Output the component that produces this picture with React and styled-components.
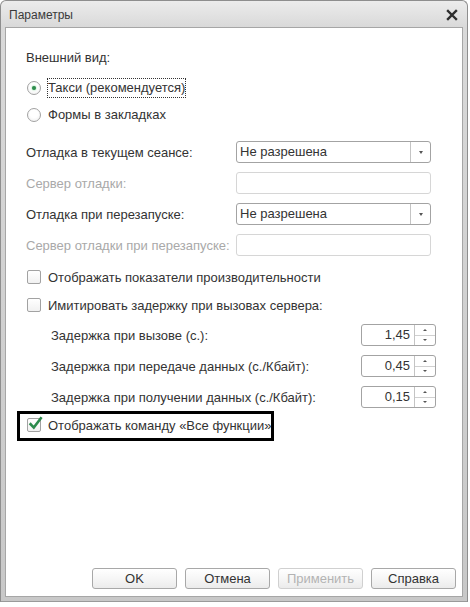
import React from "react";
import styled, { createGlobalStyle, css } from "styled-components";

const Global = createGlobalStyle`
  html, body { margin: 0; padding: 0; background: #ffffff; }
  body { font-family: "Liberation Sans", Arial, sans-serif; font-size: 13px; color: #333; }
  * { box-sizing: border-box; }
`;

const Window = styled.div`
  width: 468px;
  height: 602px;
  display: flex;
  flex-direction: column;
  border: 1px solid #8e8e8e;
  border-bottom-color: #9a9a9a;
  border-radius: 6px 6px 0 0;
  background: linear-gradient(180deg, #ececec 0px, #d9d9d9 26px, #cfcfcf 60%, #c8c8c8 100%);
`;

const TitleBar = styled.div`
  height: 26px;
  flex: none;
  display: flex;
  align-items: center;
  justify-content: space-between;
  padding: 2px 9px 0 8px;
  font-size: 12px;
  color: #3a3a3a;
`;

const Close = styled.div`
  width: 12px;
  height: 12px;
  display: flex;
`;

const Client = styled.div`
  flex: 1;
  margin: 0 4px 4px 4px;
  background: #ffffff;
  border: 1px solid #a6a6a6;
  display: flex;
  flex-direction: column;
  padding: 22px 6px 7px 20px;
`;

const Heading = styled.div`
  height: 16px;
  line-height: 16px;
  margin-bottom: 8px;
`;

const RadioRow = styled.div`
  height: 27px;
  display: flex;
  align-items: center;
  padding-left: 1px;
`;

const RadioCircle = styled.span`
  width: 14px;
  height: 14px;
  border-radius: 50%;
  border: 1px solid #a2a2a2;
  background: radial-gradient(circle at 50% 40%, #ffffff 40%, #ececec 100%);
  display: flex;
  align-items: center;
  justify-content: center;
  margin-right: 7px;
  &::after {
    content: "";
    width: 4px;
    height: 4px;
    border-radius: 50%;
    background: ${(p) => (p.$on ? "#2f8c4c" : "transparent")};
    box-shadow: ${(p) => (p.$on ? "0 0 2px #5fbf7a" : "none")};
  }
`;

const RadioLabel = styled.span`
  padding: 1px 0;
  line-height: 16px;
  border: 1px dotted ${(p) => (p.$focus ? "#333" : "transparent")};
  margin-left: -1px;
`;

const FormGrid = styled.div`
  display: grid;
  grid-template-columns: 210px 195px;
  grid-auto-rows: 22px;
  row-gap: 9px;
  margin-top: 13px;
  align-items: center;
`;

const Label = styled.span`
  color: ${(p) => (p.$disabled ? "#a9a9a9" : "#333")};
  white-space: nowrap;
`;

const SelectBox = styled.div`
  height: 22px;
  display: flex;
  border: 1px solid #a3a3a3;
  border-radius: 3px;
  background: #fff;
`;

const SelectValue = styled.span`
  flex: 1;
  line-height: 20px;
  padding-left: 3px;
`;

const SelectButton = styled.span`
  width: 20px;
  border-left: 1px solid #c4c4c4;
  display: flex;
  align-items: center;
  justify-content: center;
  &::after {
    content: "";
    border-left: 2.5px solid transparent;
    border-right: 2.5px solid transparent;
    border-top: 3px solid #555;
  }
`;

const DisabledInput = styled.div`
  height: 22px;
  border: 1px solid #d6d6d6;
  border-radius: 3px;
  background: #fff;
`;

const CheckRow = styled.div`
  height: 22px;
  display: flex;
  align-items: center;
  margin-top: ${(p) => p.$mt || 0}px;
  padding-left: 1px;
`;

const Box = styled.span`
  position: relative;
  width: 14px;
  height: 14px;
  border: 1px solid #a2a2a2;
  border-radius: 2px;
  background: linear-gradient(180deg, #ffffff, #f1f1f1);
  margin-right: 7px;
  flex: none;
`;

const Tick = styled.svg`
  position: absolute;
  left: 0px;
  top: -3px;
  width: 15px;
  height: 15px;
`;

const SpinGrid = styled.div`
  display: grid;
  grid-template-columns: 310px 75px;
  grid-auto-rows: 22px;
  row-gap: 9px;
  margin-top: 8px;
  padding-left: 25px;
  align-items: center;
`;

const Spin = styled.div`
  height: 22px;
  display: flex;
  border: 1px solid #a3a3a3;
  border-radius: 3px;
  background: #fff;
`;

const SpinValue = styled.span`
  flex: 1;
  text-align: right;
  line-height: 20px;
  padding-right: 4px;
`;

const SpinArrows = styled.span`
  width: 21px;
  border-left: 1px solid #c4c4c4;
  display: flex;
  flex-direction: column;
`;

const Arrow = styled.span`
  flex: 1;
  display: flex;
  align-items: center;
  justify-content: center;
  ${(p) =>
    p.$up
      ? css`
          border-bottom: 1px solid #d0d0d0;
          &::after {
            content: "";
            border-left: 2px solid transparent;
            border-right: 2px solid transparent;
            border-bottom: 2px solid #555;
          }
        `
      : css`
          &::after {
            content: "";
            border-left: 2px solid transparent;
            border-right: 2px solid transparent;
            border-top: 2px solid #555;
          }
        `}
`;

const Highlight = styled.div`
  width: 257px;
  height: 30px;
  margin: 3px 0 0 -9px;
  border: 3px solid #000;
  display: flex;
  align-items: center;
  padding-left: 7px;
  padding-bottom: 2px;
`;

const Spacer = styled.div`
  flex: 1;
`;

const Buttons = styled.div`
  display: flex;
  justify-content: flex-end;
  gap: 8px;
`;

const Button = styled.div`
  width: 85px;
  height: 21px;
  border: 1px solid ${(p) => (p.$disabled ? "#d0d0d0" : "#a8a8a8")};
  border-radius: 3px;
  background: linear-gradient(180deg, #ffffff 0%, #f6f6f6 50%, #ebebeb 100%);
  color: ${(p) => (p.$disabled ? "#b3b3b3" : "#333")};
  display: flex;
  align-items: center;
  justify-content: center;
  line-height: 19px;
`;

function Check({ checked, children, mt }) {
  return (
    <>
      <Box>
        {checked && (
          <Tick viewBox="0 0 15 15">
            <path d="M2.6 8.2 L5.8 11.6 L12.8 2.2" fill="none" stroke="#2b8a4b" strokeWidth="2.6" strokeLinecap="square" strokeLinejoin="miter" />
          </Tick>
        )}
      </Box>
      <Label>{children}</Label>
    </>
  );
}

export default function App() {
  return (
    <>
      <Global />
      <Window>
        <TitleBar>
          <span>Параметры</span>
          <Close>
            <svg viewBox="0 0 12 12" width="12" height="12">
              <path d="M2 2 L10 10 M10 2 L2 10" stroke="#2e2e2e" strokeWidth="2.4" strokeLinecap="square" />
            </svg>
          </Close>
        </TitleBar>
        <Client>
          <Heading>Внешний вид:</Heading>
          <RadioRow>
            <RadioCircle $on />
            <RadioLabel $focus>Такси (рекомендуется)</RadioLabel>
          </RadioRow>
          <RadioRow>
            <RadioCircle />
            <RadioLabel>Формы в закладках</RadioLabel>
          </RadioRow>

          <FormGrid>
            <Label>Отладка в текущем сеансе:</Label>
            <SelectBox>
              <SelectValue>Не разрешена</SelectValue>
              <SelectButton />
            </SelectBox>
            <Label $disabled>Сервер отладки:</Label>
            <DisabledInput />
            <Label>Отладка при перезапуске:</Label>
            <SelectBox>
              <SelectValue>Не разрешена</SelectValue>
              <SelectButton />
            </SelectBox>
            <Label $disabled>Сервер отладки при перезапуске:</Label>
            <DisabledInput />
          </FormGrid>

          <CheckRow $mt={10}>
            <Check>Отображать показатели производительности</Check>
          </CheckRow>
          <CheckRow $mt={6}>
            <Check>Имитировать задержку при вызовах сервера:</Check>
          </CheckRow>

          <SpinGrid>
            <Label>Задержка при вызове (с.):</Label>
            <Spin>
              <SpinValue>1,45</SpinValue>
              <SpinArrows>
                <Arrow $up />
                <Arrow />
              </SpinArrows>
            </Spin>
            <Label>Задержка при передаче данных (с./Кбайт):</Label>
            <Spin>
              <SpinValue>0,45</SpinValue>
              <SpinArrows>
                <Arrow $up />
                <Arrow />
              </SpinArrows>
            </Spin>
            <Label>Задержка при получении данных (с./Кбайт):</Label>
            <Spin>
              <SpinValue>0,15</SpinValue>
              <SpinArrows>
                <Arrow $up />
                <Arrow />
              </SpinArrows>
            </Spin>
          </SpinGrid>

          <Highlight>
            <Check checked>Отображать команду «Все функции»</Check>
          </Highlight>

          <Spacer />
          <Buttons>
            <Button>OK</Button>
            <Button>Отмена</Button>
            <Button $disabled>Применить</Button>
            <Button>Справка</Button>
          </Buttons>
        </Client>
      </Window>
    </>
  );
}
